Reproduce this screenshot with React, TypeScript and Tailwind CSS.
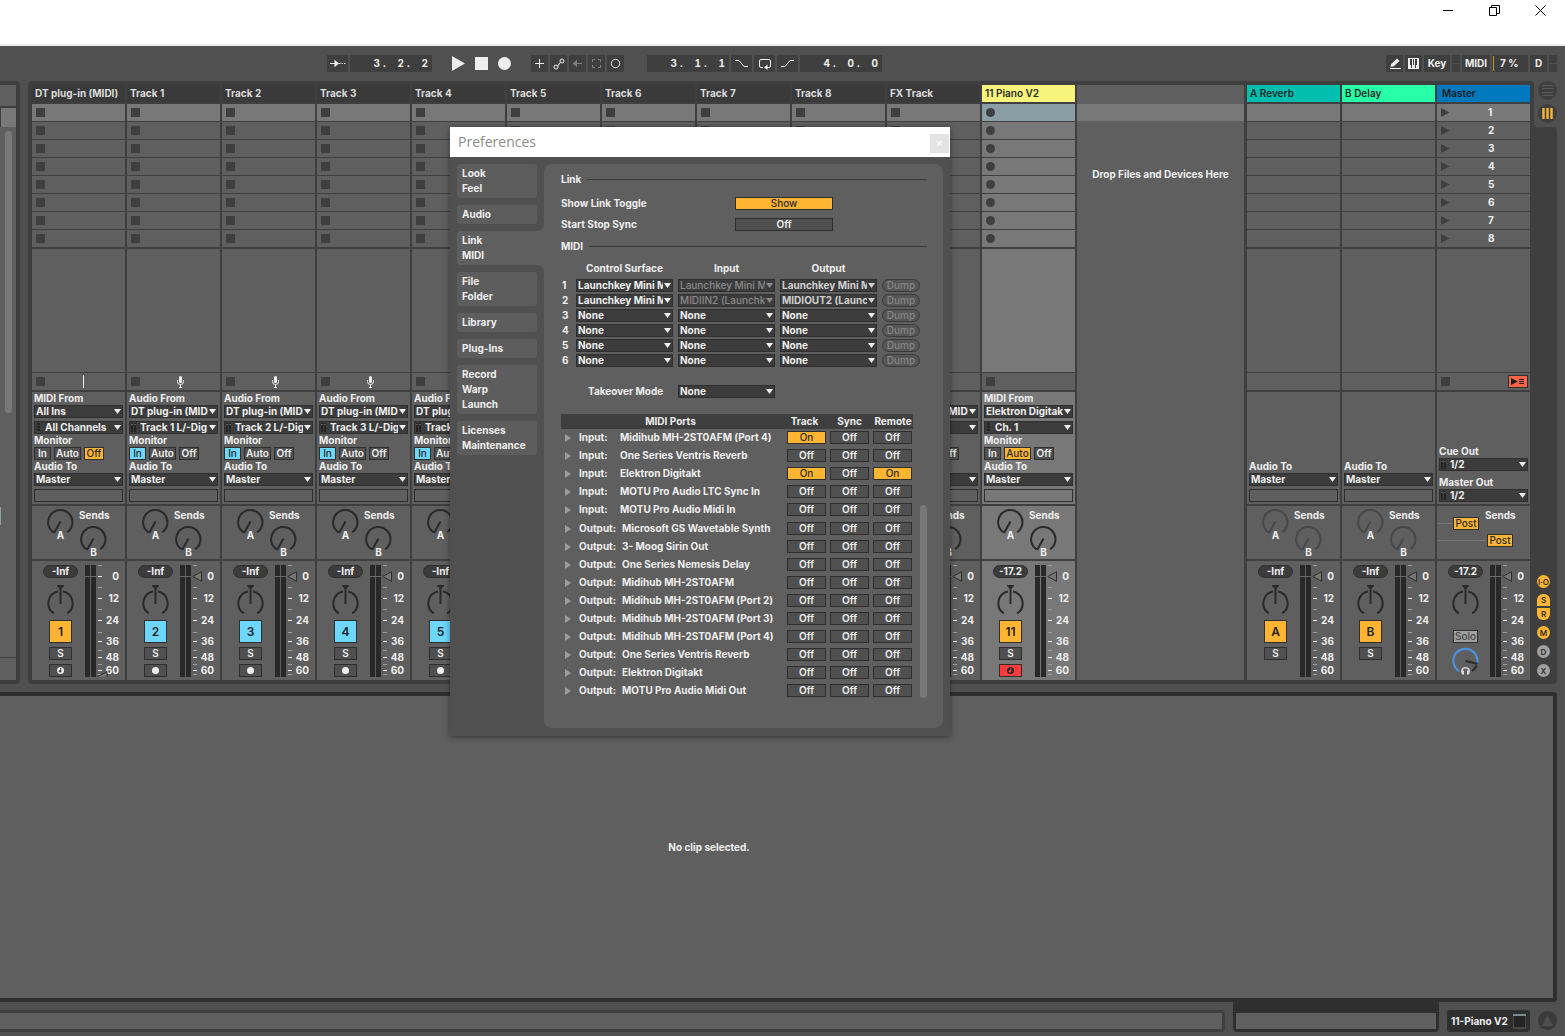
import React from "react";

const RULES = "bg-[#3f3f3f]";

type Monitor = "In" | "Auto" | "Off" | null;

interface Track {
  name: string;
  label: string;
  kind: "midi" | "audio" | "armed";
  from: string;
  channel: string;
  monitor: Monitor;
  faderDown?: boolean;
  collapsed?: boolean;
  level: string;
}

const audioTrack = (n: number): Track => ({
  name: `Track ${n}`,
  label: String(n + 1),
  kind: "audio",
  from: "DT plug-in (MIDI)",
  channel: `Track ${n} L/-Dig`,
  monitor: "In",
  collapsed: n > 4,
  level: "-Inf",
});

const TRACKS: Track[] = [
  {
    name: "DT plug-in (MIDI)",
    label: "1",
    kind: "midi",
    from: "All Ins",
    channel: "All Channels",
    monitor: "Off",
    faderDown: true,
    level: "-Inf",
  },
  ...[1, 2, 3, 4, 5, 6, 7, 8].map(audioTrack),
  {
    name: "FX Track",
    label: "10",
    kind: "audio",
    from: "DT plug-in (MIDI)",
    channel: "FX",
    monitor: "In",
    level: "-Inf",
  },
  {
    name: "11 Piano V2",
    label: "11",
    kind: "armed",
    from: "Elektron Digitakt",
    channel: "Ch. 1",
    monitor: "Auto",
    level: "-17.2",
  },
];

const SCENES = [1, 2, 3, 4, 5, 6, 7, 8];

/* ---------- shared controls ---------- */

function Dropdown({
  label,
  value,
  icon,
  tone = "normal",
}: {
  label: string;
  value: string;
  icon?: "midi" | "audio";
  tone?: "normal" | "dim" | "soft";
}) {
  const color =
    tone === "dim" ? "text-[#8a8a8a]" : tone === "soft" ? "text-[#d0d0d0]" : "text-[#eeeeee]";
  return (
    <div className={`relative h-[13px] w-full ${color}`}>
      <select
        aria-label={label}
        disabled={tone === "dim"}
        className={`block h-[13px] w-full appearance-none overflow-hidden rounded-none border border-[#2f2f2f] bg-[#3c3c3c] py-0 pr-[9px] text-[10px] leading-[11px] opacity-100 outline-none ${
          icon ? "pl-[10px]" : "pl-px"
        } ${tone === "dim" ? "font-medium" : "font-bold"}`}
      >
        <option>{value}</option>
      </select>
      {icon === "midi" && (
        <svg className="pointer-events-none absolute top-[2px] left-[3px]" width="4" height="9" viewBox="0 0 4 9">
          <path d="M0 0h3v2H0zM0 3h3v2H0zM0 6h3v2H0z" fill="#252525" />
        </svg>
      )}
      {icon === "audio" && (
        <svg className="pointer-events-none absolute top-[2px] left-[2px]" width="6" height="9" viewBox="0 0 6 9">
          <path d="M0 0h2v9H0zM3 0h2v9H3z" fill="#252525" />
          <path d="M0 1h2v1H0zM3 1h2v1H3z" fill="#5a5a5a" />
        </svg>
      )}
      <svg className="pointer-events-none absolute top-[4px] right-[2px]" width="7" height="5" viewBox="0 0 7 5">
        <path d="M0 0h7L3.5 5z" fill="currentColor" />
      </svg>
    </div>
  );
}

function Toggle({
  children,
  on,
  className = "",
}: {
  children: React.ReactNode;
  on?: "amber" | "blue";
  className?: string;
}) {
  const look =
    on === "amber"
      ? "bg-[#ffb532] text-[#2a2a2a] font-medium"
      : on === "blue"
        ? "bg-[#6cd7ff] text-[#2a2a2a] font-medium"
        : "bg-[#505050] text-[#eeeeee] font-semibold";
  return (
    <button
      type="button"
      aria-pressed={!!on}
      className={`flex h-[13px] items-center justify-center border border-[#2f2f2f] text-[10px] leading-[11px] ${look} ${className}`}
    >
      {children}
    </button>
  );
}

function HiddenSlider({ label, value }: { label: string; value: number }) {
  return (
    <input
      type="range"
      aria-label={label}
      defaultValue={value}
      className="absolute inset-0 h-full w-full cursor-pointer opacity-0"
    />
  );
}

/* ---------- session columns ---------- */

function SendKnob({ name, dim }: { name: string; dim?: boolean }) {
  return (
    <div className={`relative h-[34px] w-[28px] ${dim ? "text-[#484848]" : "text-[#2a2a2a]"}`}>
      <svg width="28" height="28" viewBox="0 0 28 28" fill="none" stroke="currentColor" strokeWidth="2">
        <path d="M7.6 24.4A12.2 12.2 0 1 1 21.2 24.2" />
        <path d="M14.5 13.5L8 25" />
      </svg>
      <span className="absolute inset-x-0 top-[21px] pl-px text-center leading-[12px] text-[#eeeeee]">{name}</span>
      <HiddenSlider label={`Send ${name}`} value={0} />
    </div>
  );
}

function PanKnob() {
  return (
    <div className="relative h-[30px] w-[29px] text-[#2a2a2a]">
      <svg width="29" height="30" viewBox="0 0 29 30" fill="none" stroke="currentColor" strokeWidth="2">
        <path d="M7.8 28.4A12 12 0 0 1 12 6.6M17 6.6A12 12 0 0 1 21.2 28.4" />
        <path d="M14.5 3v16" />
        <path d="M11 0h7v1l-3 3h-1l-3-3z" fill="currentColor" stroke="none" />
      </svg>
      <HiddenSlider label="Pan" value={50} />
    </div>
  );
}

function CueKnob() {
  return (
    <div className="relative h-[30px] w-[29px]">
      <svg width="29" height="30" viewBox="0 0 29 30" fill="none" strokeWidth="2">
        <path d="M8 24A12 12 0 1 1 26.1 16.5" stroke="#4a94e8" />
        <path d="M14.5 14l12 2.8" stroke="#2a2a2a" />
        <path d="M25.6 18.5A12 12 0 0 1 21 24" stroke="#2a2a2a" />
        <path d="M11.600 26.500C9.500 23 11.600 20.700 14.500 20.700S19.500 23 17.400 26.500" stroke="#d8d8d8" strokeWidth="1.500" />
        <path d="M10.500 23.500h2.500v4h-2zM16 23.500h2.500l-.5 4h-2z" fill="#d8d8d8" />
      </svg>
      <HiddenSlider label="Cue volume" value={80} />
    </div>
  );
}

const MAJOR_TICKS = [11, 33, 55, 76, 92, 105];
const MINOR_TICKS = [0, 22, 44, 67, 85, 99, 109];

function Meter({ faderDown }: { faderDown?: boolean }) {
  return (
    <div className="flex flex-1 items-start">
      <svg width="11" height="112" viewBox="0 0 11 112" shapeRendering="crispEdges">
        <path d="M0 0h5v112H0zM6 0h5v112H6z" fill="#282828" />
        <path d="M0 11h11v1H0z" fill="#6a6a6a" />
      </svg>
      <div className="relative ml-px h-[112px] w-[5px]">
        <svg className="absolute top-0 left-0" width="11" height="112" viewBox="0 0 11 112">
          <g shapeRendering="crispEdges">
            {MAJOR_TICKS.map((y) => (
              <rect key={y} x="1" y={y} width="4" height="1" fill="#f0f0f0" />
            ))}
            {MINOR_TICKS.map((y) => (
              <rect key={y} x="1" y={y} width="4" height="1" fill="#9c9c9c" />
            ))}
          </g>
          <path
            d={faderDown ? "M.8 111.500L10 106.500V116.500z" : "M.8 11.500L9.500 6.700V16.300z"}
            fill="#757575"
            stroke="#2f2f2f"
          />
        </svg>
        <HiddenSlider label="Volume" value={faderDown ? 0 : 85} />
      </div>
      <div className="flex flex-1 flex-col pt-[5px] pr-[6px] text-right leading-[13px]">
        <span>0</span>
        <span className="mt-[9px]">12</span>
        <span className="mt-[9px]">24</span>
        <span className="mt-[8px]">36</span>
        <span className="mt-[3px]">48</span>
        <span>60</span>
      </div>
    </div>
  );
}

function LevelPill({ children }: { children: React.ReactNode }) {
  return (
    <div className="flex h-[13px] w-[35px] shrink-0 items-center justify-center rounded-full border border-[#2f2f2f] bg-[#3c3c3c] leading-[11px]">
      {children}
    </div>
  );
}

function ArmIcon({ kind }: { kind: Track["kind"] }) {
  const dot = kind === "armed" ? "#2a2a2a" : "#eeeeee";
  const note = kind === "armed" ? "#ff3a3a" : "#3c3c3c";
  return (
    <svg width="7" height="7" viewBox="0 0 7 7">
      <circle cx="3.5" cy="3.5" r="3.5" fill={dot} />
      {kind !== "audio" && (
        <>
          <path d="M3.800 .8v3.200" stroke={note} />
          <circle cx="3" cy="4.300" r="1.200" fill={note} />
        </>
      )}
    </svg>
  );
}

function Mic() {
  return (
    <svg width="9" height="12" viewBox="0 0 9 12" fill="none" stroke="#eeeeee">
      <rect x="3" y="0" width="3" height="7" rx="1.500" fill="#eeeeee" stroke="none" />
      <path d="M1.500 4v1.500a3 3 0 0 0 6 0V4M4.500 8.500V11M3 11.500h3" />
    </svg>
  );
}

function Sends({ dim }: { dim?: boolean }) {
  return (
    <>
      <div className="pt-[2px]">
        <SendKnob name="A" dim={dim} />
      </div>
      <div className="ml-[5px] flex flex-col pt-[3px]">
        <span className="leading-[12px]">Sends</span>
        <div className="mt-[4px]">
          <SendKnob name="B" dim={dim} />
        </div>
      </div>
    </>
  );
}

function TrackColumn({ track }: { track: Track }) {
  const armed = track.kind === "armed";
  const face = armed ? "bg-[#787878]" : "bg-[#5f5f5f]";
  return (
    <section className="flex w-[93px] shrink-0 flex-col gap-[2px]" aria-label={track.name}>
      <h2
        className={`h-[17px] overflow-hidden pl-[3px] leading-[17px] whitespace-nowrap ${
          armed ? "bg-[#f7f47c] font-semibold text-[#2a2a2a]" : "bg-[#3a3a3a] text-[#dcdcdc]"
        }`}
      >
        {track.name}
      </h2>
      <div className="flex flex-col gap-px">
        {SCENES.map((s) => (
          <div
            key={s}
            className={`flex h-[17px] items-center pl-[4px] ${
              s === 1 ? (armed ? "bg-[#8a9ea6]" : "bg-[#787878]") : face
            }`}
          >
            <button
              type="button"
              aria-label={`Slot ${s}`}
              className={`h-[9px] w-[9px] bg-[#3f3f3f] ${armed ? "rounded-full" : ""}`}
            />
          </div>
        ))}
        <div className={`mt-px h-[123px] ${face}`} />
        <div className="flex h-[17px] items-center bg-[#5f5f5f] pl-[4px]">
          <button type="button" aria-label="Stop clips" className="h-[9px] w-[9px] bg-[#3f3f3f]" />
          {track.kind === "midi" && <span className="ml-[38px] h-[13px] w-px bg-[#eeeeee]" />}
          {track.kind === "audio" && (
            <span className="ml-[36px]">
              <Mic />
            </span>
          )}
        </div>
      </div>
      {track.collapsed ? (
        <>
          <div className="h-[112px] bg-[#5f5f5f]" />
          <div className="h-[53px] bg-[#5f5f5f]" />
          <div className="h-[119px] bg-[#5f5f5f]" />
        </>
      ) : (
        <>
          <TrackRouting track={track} face={face} />
          <div className={`flex h-[53px] pl-[14px] ${face}`}>
            <Sends />
          </div>
          <TrackMixer track={track} face={face} />
        </>
      )}
    </section>
  );
}

function TrackRouting({ track, face }: { track: Track; face: string }) {
  return (
    <div className={`flex h-[112px] flex-col px-[2px] leading-[13px] ${face}`}>
      <span>{track.kind === "audio" ? "Audio From" : "MIDI From"}</span>
      <Dropdown label="Input type" value={track.from} />
      <div className="mt-[3px]">
        <Dropdown label="Input channel" value={track.channel} icon={track.kind === "audio" ? "audio" : "midi"} />
      </div>
      <span>Monitor</span>
      <div className="flex gap-[3px]">
        <Toggle className="w-[17px]" on={track.monitor === "In" ? "blue" : undefined}>
          In
        </Toggle>
        <Toggle className="w-[27px]" on={track.monitor === "Auto" ? "amber" : undefined}>
          Auto
        </Toggle>
        <Toggle className="w-[20px]" on={track.monitor === "Off" ? "amber" : undefined}>
          Off
        </Toggle>
      </div>
      <span>Audio To</span>
      <Dropdown label="Output type" value="Master" />
      <div className="mt-[3px] h-[13px] border border-[#2f2f2f]" />
    </div>
  );
}

function TrackMixer({ track, face }: { track: Track; face: string }) {
  const armed = track.kind === "armed";
  return (
    <div className={`flex h-[119px] pt-[4px] pl-[11px] ${face}`}>
      <div className="mr-[7px] flex w-[35px] flex-col items-center">
        <LevelPill>{track.level}</LevelPill>
        <div className="mt-[7px]">
          <PanKnob />
        </div>
        <button
          type="button"
          className={`mt-[5px] flex h-[23px] w-[23px] shrink-0 items-center justify-center border border-[#2f2f2f] text-[12px] font-semibold text-[#1e1e1e] ${
            track.kind === "audio" ? "bg-[#6cd7ff]" : "bg-[#ffb532]"
          }`}
        >
          {track.label}
        </button>
        <Toggle className="mt-[4px] w-[23px] shrink-0">S</Toggle>
        <button
          type="button"
          aria-label="Arm"
          className={`mt-[4px] flex h-[13px] w-[23px] shrink-0 items-center justify-center border border-[#2f2f2f] ${
            armed ? "bg-[#ff3a3a]" : "bg-[#505050]"
          }`}
        >
          <ArmIcon kind={track.kind} />
        </button>
      </div>
      <Meter faderDown={track.faderDown} />
    </div>
  );
}

function SceneRows({ numbered }: { numbered?: boolean }) {
  return (
    <>
      {SCENES.map((s) => (
        <div key={s} className={`flex h-[17px] items-center pl-[4px] ${s === 1 ? "bg-[#787878]" : "bg-[#5f5f5f]"}`}>
          {numbered && (
            <>
              <button type="button" aria-label={`Launch scene ${s}`}>
                <svg className="block" width="9" height="9" viewBox="0 0 9 9">
                  <path d="M0 0L8.500 4.500L0 9z" fill="#3f3f3f" />
                </svg>
              </button>
              <span className="ml-[38px]">{s}</span>
            </>
          )}
        </div>
      ))}
      <div className="mt-px h-[123px] bg-[#5f5f5f]" />
    </>
  );
}

function ReturnColumn({ letter, name }: { letter: string; name: string }) {
  return (
    <section className="flex w-[93px] shrink-0 flex-col gap-[2px]" aria-label={`${letter} ${name}`}>
      <h2
        className={`h-[17px] pl-[3px] leading-[17px] font-semibold text-[#2a2a2a] ${
          letter === "A" ? "bg-[#00bfaf]" : "bg-[#26ffa8]"
        }`}
      >
        {letter} {name}
      </h2>
      <div className="flex flex-col gap-px">
        <SceneRows />
        <div className="h-[17px] bg-[#5f5f5f]" />
      </div>
      <div className="flex h-[112px] flex-col justify-end bg-[#5f5f5f] px-[2px] pb-[2px] leading-[13px]">
        <span>Audio To</span>
        <Dropdown label="Output type" value="Master" />
        <div className="mt-[3px] h-[13px] border border-[#2f2f2f]" />
      </div>
      <div className="flex h-[53px] bg-[#5f5f5f] pl-[14px]">
        <Sends dim />
      </div>
      <div className="flex h-[119px] bg-[#5f5f5f] pt-[4px] pl-[11px]">
        <div className="mr-[7px] flex w-[35px] flex-col items-center">
          <LevelPill>-Inf</LevelPill>
          <div className="mt-[7px]">
            <PanKnob />
          </div>
          <button
            type="button"
            className="mt-[5px] flex h-[23px] w-[23px] shrink-0 items-center justify-center border border-[#2f2f2f] bg-[#ffb532] text-[12px] font-semibold text-[#1e1e1e]"
          >
            {letter}
          </button>
          <Toggle className="mt-[4px] w-[23px] shrink-0">S</Toggle>
        </div>
        <Meter />
      </div>
    </section>
  );
}

function MasterColumn() {
  return (
    <section className="flex w-[93px] shrink-0 flex-col gap-[2px]" aria-label="Master">
      <h2 className="h-[17px] bg-[#0079bf] pl-[5px] leading-[17px] font-semibold text-[#1e1e1e]">Master</h2>
      <div className="flex flex-col gap-px">
        <SceneRows numbered />
        <div className="flex h-[17px] items-center justify-between bg-[#5f5f5f] pr-[2px] pl-[4px]">
          <button type="button" aria-label="Stop all clips" className="h-[9px] w-[9px] bg-[#3f3f3f]" />
          <button
            type="button"
            aria-label="Back to arrangement"
            className="flex h-[13px] w-[20px] items-center justify-center border border-[#2f2f2f] bg-[#ff6446]"
          >
            <svg width="14" height="7" viewBox="0 0 14 7">
              <path d="M0 0L7 3.500L0 7z" fill="#1e1e1e" />
              <path d="M8 1.500h5M8 3.500h5M8 5.500h5" stroke="#1e1e1e" />
            </svg>
          </button>
        </div>
      </div>
      <div className="flex h-[112px] flex-col justify-end bg-[#5f5f5f] px-[2px] pb-[2px] leading-[13px]">
        <span>Cue Out</span>
        <Dropdown label="Cue output" value="1/2" icon="audio" />
        <span className="mt-[5px]">Master Out</span>
        <Dropdown label="Master output" value="1/2" icon="audio" />
      </div>
      <div className="h-[53px] bg-[#5f5f5f] pl-px">
        <div className="flex h-[24px] items-start">
          <span className="mt-[17px] mr-px h-px w-[14px] bg-[#787878]" />
          <Toggle on="amber" className="mt-[11px] w-[26px]">
            Post
          </Toggle>
          <span className="mt-[3px] ml-[6px] leading-[12px]">Sends</span>
        </div>
        <div className="mt-[4px] flex items-center">
          <span className="mr-px h-px w-[48px] bg-[#787878]" />
          <Toggle on="amber" className="w-[26px]">
            Post
          </Toggle>
        </div>
      </div>
      <div className="flex h-[119px] bg-[#5f5f5f] pt-[4px] pl-[11px]">
        <div className="mr-[7px] flex w-[35px] flex-col items-center">
          <LevelPill>-17.2</LevelPill>
          <div className="mt-[7px]">
            <PanKnob />
          </div>
          <button
            type="button"
            className="mt-[15px] flex h-[13px] w-[25px] shrink-0 items-center justify-center border border-[#2f2f2f] bg-[#a0a0a0] leading-[11px] font-medium text-[#484848]"
          >
            Solo
          </button>
          <div className="mt-[4px]">
            <CueKnob />
          </div>
        </div>
        <Meter />
      </div>
    </section>
  );
}

function RoundSwitch({ children, shape, on }: { children: string; shape: string; on?: boolean }) {
  return (
    <button
      type="button"
      className={`flex w-[13px] items-center justify-center text-[8px] leading-none font-semibold text-[#2f2f2f] ${shape} ${
        on ? "bg-[#ffb532]" : "bg-[#a0a0a0]"
      }`}
    >
      {children}
    </button>
  );
}

function SideStrip() {
  return (
    <aside className="flex w-[23px] shrink-0 flex-col">
      <div className={RULES}>
        <div className="flex h-[46px] flex-col items-end gap-[4px] rounded-bl-[4px] bg-[#505050]">
          <button
            type="button"
            aria-label="Arrangement view"
            className="flex h-[19px] w-[19px] items-center justify-center rounded-full bg-[#3f3f3f]"
          >
            <svg width="11" height="11" viewBox="0 0 11 11" stroke="#5a5a5a">
              <path d="M0 .5h11M0 3.500h11M0 7.500h11M0 10.500h11" />
            </svg>
          </button>
          <button
            type="button"
            aria-label="Session view"
            className="flex h-[19px] w-[19px] items-center justify-center rounded-full bg-[#3f3f3f]"
          >
            <svg width="11" height="11" viewBox="0 0 11 11">
              <path d="M0 0h3v11H0zM4 0h3v11H4zM8 0h3v11H8z" fill="#c8922e" />
              <path d="M1 0h1v11H1zM5 0h1v11H5zM9 0h1v11H9z" fill="#ffb532" />
            </svg>
          </button>
        </div>
      </div>
      <div className="flex flex-1 flex-col justify-end rounded-r-[4px] bg-[#3f3f3f] pb-[7px] pl-[3px]">
        <RoundSwitch on shape="h-[13px] rounded-full">
          I·O
        </RoundSwitch>
        <RoundSwitch on shape="mt-[6px] h-[12px] rounded-t-[6px]">
          S
        </RoundSwitch>
        <RoundSwitch on shape="mt-[2px] h-[12px] rounded-b-[6px]">
          R
        </RoundSwitch>
        <RoundSwitch on shape="mt-[6px] h-[13px] rounded-full">
          M
        </RoundSwitch>
        <RoundSwitch shape="mt-[6px] h-[13px] rounded-full">D</RoundSwitch>
        <RoundSwitch shape="mt-[6px] h-[13px] rounded-full">X</RoundSwitch>
      </div>
    </aside>
  );
}

/* ---------- window chrome and transport ---------- */

function TitleBar() {
  return (
    <header className="flex h-[46px] items-start justify-end border-b-2 border-[#ececec] bg-white pr-[2px]">
      <button type="button" aria-label="Minimize" className="flex h-[20px] w-[46px] items-center justify-center">
        <svg width="11" height="11" viewBox="0 0 11 11" stroke="#000">
          <path d="M0 5.500h10" />
        </svg>
      </button>
      <button type="button" aria-label="Restore" className="flex h-[20px] w-[46px] items-center justify-center">
        <svg width="11" height="11" viewBox="0 0 11 11" fill="none" stroke="#000">
          <path d="M.5 2.500h7v8h-7zM2.500 2.500v-2h8v8h-3" />
        </svg>
      </button>
      <button type="button" aria-label="Close" className="flex h-[20px] w-[46px] items-center justify-center">
        <svg width="11" height="11" viewBox="0 0 11 11" stroke="#000">
          <path d="M.5.5l10 10M10.500.5l-10 10" />
        </svg>
      </button>
    </header>
  );
}

function Counter({ a, b, c }: { a: string; b: string; c: string }) {
  return (
    <div className="flex h-[17px] w-[82px] items-center justify-end bg-[#3f3f3f] pr-[4px] text-[10px] tabular-nums">
      <span className="flex w-[24px] gap-[3px]">
        <span>{a}</span>
        <span>.</span>
      </span>
      <span className="flex w-[24px] gap-[3px]">
        <span>{b}</span>
        <span>.</span>
      </span>
      <span>{c}</span>
    </div>
  );
}

function ToolButton({ label, wide, children }: { label: string; wide?: boolean; children: React.ReactNode }) {
  return (
    <button
      type="button"
      aria-label={label}
      className={`flex h-[17px] items-center justify-center bg-[#3f3f3f] ${wide ? "w-[21px]" : "w-[17px]"}`}
    >
      {children}
    </button>
  );
}

function Toolbar() {
  return (
    <div className="flex h-[35px] items-center pr-[8px] pl-[327px]">
      <div className="flex gap-[2px]">
        <ToolButton label="Follow" wide>
          <svg width="16" height="9" viewBox="0 0 16 9" fill="none" stroke="#eeeeee">
            <path d="M0 4.500h5" />
            <path d="M4.500.8v7.400L9 4.500z" fill="#eeeeee" stroke="none" />
            <path d="M9 4.500h1.500M11.500 4.500h1.500M14 4.500h1.500" />
          </svg>
        </ToolButton>
        <Counter a="3" b="2" c="2" />
      </div>
      <div className="ml-[19px] flex items-center gap-[10px]">
        <button type="button" aria-label="Play">
          <svg className="block" width="14" height="15" viewBox="0 0 14 15">
            <path d="M1 0L14 7.500L1 15z" fill="#eeeeee" />
          </svg>
        </button>
        <button type="button" aria-label="Stop" className="h-[13px] w-[13px] bg-[#eeeeee]" />
        <button type="button" aria-label="Record" className="h-[13px] w-[13px] rounded-full bg-[#eeeeee]" />
      </div>
      <div className="ml-[20px] flex gap-[2px]">
        <ToolButton label="Overdub">
          <svg width="11" height="11" viewBox="0 0 11 11" stroke="#eeeeee">
            <path d="M5.500 1v9M1 5.500h9" />
          </svg>
        </ToolButton>
        <ToolButton label="Automation arm">
          <svg width="12" height="12" viewBox="0 0 12 12" fill="none" stroke="#eeeeee">
            <circle cx="3" cy="9" r="2" />
            <circle cx="9" cy="3" r="2" />
            <path d="M4.500 8L5.500 7.500L6.500 5L7.500 4.300" />
          </svg>
        </ToolButton>
        <ToolButton label="Re-enable automation">
          <svg width="11" height="9" viewBox="0 0 11 9" fill="none" stroke="#808080">
            <path d="M4 4.500h6" />
            <path d="M5 .8v7.400L.8 4.500z" fill="#808080" stroke="none" />
          </svg>
        </ToolButton>
        <ToolButton label="Capture">
          <svg width="11" height="11" viewBox="0 0 11 11" fill="none" stroke="#808080">
            <path d="M1.500 4V1.500H4M7 1.500h2.500V4M9.500 7v2.500H7M4 9.500H1.500V7" />
          </svg>
        </ToolButton>
        <ToolButton label="Session record">
          <svg width="11" height="11" viewBox="0 0 11 11" fill="none" stroke="#eeeeee">
            <circle cx="5.500" cy="5.500" r="4.200" />
          </svg>
        </ToolButton>
      </div>
      <div className="ml-[23px] flex gap-[2px]">
        <Counter a="3" b="1" c="1" />
        <ToolButton label="Punch in" wide>
          <svg width="13" height="9" viewBox="0 0 13 9" fill="none" stroke="#eeeeee">
            <path d="M0 1.500h4l5 6h4" />
          </svg>
        </ToolButton>
        <ToolButton label="Loop" wide>
          <svg width="14" height="12" viewBox="0 0 14 12" fill="none" stroke="#eeeeee">
            <path d="M5 9.500H3a1.500 1.500 0 0 1-1.500-1.500V3A1.500 1.500 0 0 1 3 1.500h8A1.500 1.500 0 0 1 12.500 3v5A1.500 1.500 0 0 1 11 9.500H9" />
            <path d="M9.500 6.500v5.500L6 9.500z" fill="#eeeeee" stroke="none" />
          </svg>
        </ToolButton>
        <ToolButton label="Punch out" wide>
          <svg width="13" height="9" viewBox="0 0 13 9" fill="none" stroke="#eeeeee">
            <path d="M0 7.500h4l5-6h4" />
          </svg>
        </ToolButton>
        <Counter a="4" b="0" c="0" />
      </div>
      <div className="ml-auto flex gap-[2px]">
        <ToolButton label="Draw mode">
          <svg width="12" height="12" viewBox="0 0 12 12">
            <path d="M1.500 9L2.200 6L8 .6L10.500 2.900L4.500 8.500z" fill="#eeeeee" />
            <path d="M1 10.500h11" stroke="#eeeeee" />
          </svg>
        </ToolButton>
        <ToolButton label="Computer MIDI keyboard">
          <svg width="11" height="11" viewBox="0 0 11 11" shapeRendering="crispEdges">
            <path d="M0 0h11v11H0z" fill="#eeeeee" />
            <path d="M2 1h2v6H2zM7 1h2v6H7zM3 7h1v3H3zM7 7h1v3H7zM5 1h1v6H5z" fill="#3f3f3f" />
          </svg>
        </ToolButton>
        <button type="button" className="h-[17px] w-[26px] bg-[#3f3f3f]">
          Key
        </button>
        <span className="flex h-[17px] w-[8px] flex-col gap-px">
          <span className="flex-1 bg-[#3f3f3f]" />
          <span className="flex-1 bg-[#3f3f3f]" />
        </span>
        <button type="button" className="h-[17px] w-[28px] bg-[#3f3f3f]">
          MIDI
        </button>
        <span className="flex h-[17px] w-[36px] items-center bg-[#3f3f3f] pl-px">
          <span className="mr-[6px] h-[15px] w-px bg-[#c8922e]" />7 %
        </span>
        <button type="button" className="h-[17px] w-[17px] bg-[#3f3f3f]">
          D
        </button>
        <span className="flex h-[17px] w-[8px] flex-col gap-px">
          <span className="flex-1 bg-[#3f3f3f]" />
          <span className="flex-1 bg-[#3f3f3f]" />
        </span>
      </div>
    </div>
  );
}

function BrowserEdge() {
  return (
    <aside className="mr-[8px] flex w-[20px] shrink-0 flex-col rounded-r-[4px] bg-[#3f3f3f] py-[4px] pr-[4px]">
      <div className="h-[21px] bg-[#5f5f5f]" />
      <div className="mt-[2px] ml-px h-[19px] bg-[#787878]" />
      <div className="flex flex-1 flex-col items-end bg-[#5f5f5f] pt-[4px] pr-[4px]">
        <div className="h-[282px] w-[7px] rounded-full bg-[#787878]" />
        <div className="mt-[94px] h-[18px] w-px self-start bg-[#8a9ea6]" />
      </div>
      <div className="mt-px h-[22px] bg-[#5f5f5f]" />
    </aside>
  );
}

/* ---------- preferences dialog ---------- */

const PREF_TABS = [
  ["Look", "Feel"],
  ["Audio"],
  ["Link", "MIDI"],
  ["File", "Folder"],
  ["Library"],
  ["Plug-Ins"],
  ["Record", "Warp", "Launch"],
  ["Licenses", "Maintenance"],
];

const SURFACES = [
  ["Launchkey Mini MK3", "Launchkey Mini MK3", "Launchkey Mini MK3"],
  ["Launchkey Mini MK3", "MIDIIN2 (Launchkey)", "MIDIOUT2 (Launchkey)"],
  ["None", "None", "None"],
  ["None", "None", "None"],
  ["None", "None", "None"],
  ["None", "None", "None"],
];

const PORTS: { dir: "Input" | "Output"; name: string; on: [boolean, boolean, boolean] }[] = [
  { dir: "Input", name: "Midihub MH-2ST0AFM (Port 4)", on: [true, false, false] },
  { dir: "Input", name: "One Series Ventris Reverb", on: [false, false, false] },
  { dir: "Input", name: "Elektron Digitakt", on: [true, false, true] },
  { dir: "Input", name: "MOTU Pro Audio LTC Sync In", on: [false, false, false] },
  { dir: "Input", name: "MOTU Pro Audio Midi In", on: [false, false, false] },
  { dir: "Output", name: "Microsoft GS Wavetable Synth", on: [false, false, false] },
  { dir: "Output", name: "3- Moog Sirin Out", on: [false, false, false] },
  { dir: "Output", name: "One Series Nemesis Delay", on: [false, false, false] },
  { dir: "Output", name: "Midihub MH-2ST0AFM", on: [false, false, false] },
  { dir: "Output", name: "Midihub MH-2ST0AFM (Port 2)", on: [false, false, false] },
  { dir: "Output", name: "Midihub MH-2ST0AFM (Port 3)", on: [false, false, false] },
  { dir: "Output", name: "Midihub MH-2ST0AFM (Port 4)", on: [false, false, false] },
  { dir: "Output", name: "One Series Ventris Reverb", on: [false, false, false] },
  { dir: "Output", name: "Elektron Digitakt", on: [false, false, false] },
  { dir: "Output", name: "MOTU Pro Audio Midi Out", on: [false, false, false] },
];

function SectionTitle({ children }: { children: string }) {
  return (
    <h3 className="flex items-center gap-[6px] leading-[13px]">
      {children}
      <span className="h-px flex-1 bg-[#3a3a3a]" />
    </h3>
  );
}

function Preferences() {
  return (
    <div
      role="dialog"
      aria-label="Preferences"
      className="absolute top-[127px] left-[450px] w-[500px] bg-[#505050] shadow-[0_1px_6px_rgba(0,0,0,0.45)]"
    >
      <div className="flex h-[30px] items-center justify-between bg-white pr-px pl-[8px]">
        <h2 className="font-['Open_Sans',sans-serif] text-[14px] leading-[20px] font-normal text-[#8c8c8c]">
          Preferences
        </h2>
        <button
          type="button"
          aria-label="Close preferences"
          className="mt-[3px] flex h-[19px] w-[19px] items-center justify-center bg-[#e3e3e3]"
        >
          <svg width="7" height="7" viewBox="0 0 7 7" stroke="#f6f6f6" strokeWidth="1.500">
            <path d="M1 1l5 5M6 1L1 6" />
          </svg>
        </button>
      </div>
      <div className="flex px-[7px] pt-[7px] pb-[8px]">
        <nav className="flex w-[87px] flex-col gap-[7px] leading-[15px]">
          {PREF_TABS.map((lines) => {
            const active = lines[1] === "MIDI";
            return (
              <button
                key={lines[0]}
                type="button"
                className={`relative flex flex-col items-start py-[2px] pl-[5px] ${
                  active ? "rounded-l-[3px] bg-[#5f5f5f]" : "mr-[7px] rounded-[3px] bg-[#5d5d5d]"
                }`}
              >
                {lines.map((l) => (
                  <span key={l}>{l}</span>
                ))}
                {active && (
                  <>
                    <svg className="absolute -top-[7px] right-0" width="7" height="7" viewBox="0 0 7 7">
                      <path d="M7 0V7H0A7 7 0 0 0 7 0z" fill="#5f5f5f" />
                    </svg>
                    <svg className="absolute right-0 -bottom-[7px]" width="7" height="7" viewBox="0 0 7 7">
                      <path d="M7 7V0H0A7 7 0 0 1 7 7z" fill="#5f5f5f" />
                    </svg>
                  </>
                )}
              </button>
            );
          })}
        </nav>
        <div className="flex-1 rounded-[8px] bg-[#5f5f5f] pt-[9px] pr-[16px] pb-[30px] pl-[17px]">
          <SectionTitle>Link</SectionTitle>
          <div className="mt-[11px] flex items-center leading-[13px]">
            <span className="w-[174px]">Show Link Toggle</span>
            <Toggle on="amber" className="w-[98px]">
              Show
            </Toggle>
          </div>
          <div className="mt-[8px] flex items-center leading-[13px]">
            <span className="w-[174px]">Start Stop Sync</span>
            <Toggle className="w-[98px]">Off</Toggle>
          </div>
          <div className="mt-[9px]">
            <SectionTitle>MIDI</SectionTitle>
          </div>
          <div className="mt-[9px] grid grid-cols-[10px_97px_97px_97px_38px] gap-x-[5px] gap-y-[2px] leading-[13px]">
            <span />
            <span className="mb-[2px] text-center">Control Surface</span>
            <span className="mb-[2px] text-center">Input</span>
            <span className="mb-[2px] text-center">Output</span>
            <span />
            {SURFACES.map(([surface, input, output], i) => (
              <React.Fragment key={i}>
                <span className="pl-px">{i + 1}</span>
                <Dropdown label={`Control surface ${i + 1}`} value={surface} />
                <Dropdown label={`Input ${i + 1}`} value={input} tone={i < 2 ? "dim" : "normal"} />
                <Dropdown label={`Output ${i + 1}`} value={output} tone={i < 2 ? "soft" : "normal"} />
                <button
                  type="button"
                  disabled
                  className="h-[13px] rounded-full border border-[#3a3a3a] bg-[#565656] leading-[11px] font-medium text-[#858585]"
                >
                  Dump
                </button>
              </React.Fragment>
            ))}
          </div>
          <div className="mt-[18px] flex items-center pl-[27px] leading-[13px]">
            <span className="w-[90px]">Takeover Mode</span>
            <div className="w-[97px]">
              <Dropdown label="Takeover mode" value="None" />
            </div>
          </div>
          <div className="mt-[16px] flex h-[284px] justify-between">
            <table className="w-[352px] table-fixed border-collapse self-start leading-[13px]">
              <colgroup>
                <col className="w-[18px]" />
                <col className="w-[41px]" />
                <col className="w-[167px]" />
                <col className="w-[43px]" />
                <col className="w-[43px]" />
                <col className="w-[40px]" />
              </colgroup>
              <thead>
                <tr className="h-[15px] bg-[#3f3f3f]">
                  <th colSpan={3} className="p-0 pr-[7px] font-bold">
                    MIDI Ports
                  </th>
                  <th className="p-0 pr-[8px] font-bold">Track</th>
                  <th className="p-0 pr-[4px] font-bold">Sync</th>
                  <th className="p-0 font-bold">Remote</th>
                </tr>
              </thead>
              <tbody>
                {PORTS.map((p, i) => {
                  const first = i === 5;
                  const cell = first ? "p-0 pt-[3px] align-top" : "p-0 pt-[2px] align-top";
                  return (
                    <tr key={i} className={first ? "h-[19px]" : "h-[18px]"}>
                      <td className={`${cell} pl-[4px]`}>
                        <button type="button" aria-label="Expand port" className="flex h-[13px] items-center">
                          <svg width="6" height="8" viewBox="0 0 6 8">
                            <path d="M0 0L6 4L0 8z" fill="#9c9c9c" />
                          </svg>
                        </button>
                      </td>
                      <td className={cell}>{p.dir}:</td>
                      <td className={`${cell} ${p.dir === "Output" ? "pl-[2px]" : ""}`}>{p.name}</td>
                      {p.on.map((v, k) => (
                        <td key={k} className={cell}>
                          <Toggle on={v ? "amber" : undefined} className="w-[39px]">
                            {v ? "On" : "Off"}
                          </Toggle>
                        </td>
                      ))}
                    </tr>
                  );
                })}
              </tbody>
            </table>
            <div className="h-[193px] w-[7px] self-end rounded-full bg-[#787878]" />
          </div>
        </div>
      </div>
    </div>
  );
}

/* ---------- page ---------- */

export default function App() {
  return (
    <div className="relative flex min-h-screen flex-col overflow-hidden bg-[#505050] font-['Inter',sans-serif] text-[10px] font-bold text-[#eeeeee]">
      <TitleBar />
      <Toolbar />
      <div className="flex pr-[8px]">
        <BrowserEdge />
        <main className="flex min-w-0 flex-1 gap-[2px] rounded-l-[4px] rounded-tr-[4px] bg-[#3f3f3f] p-[4px]">
          {TRACKS.map((t) => (
            <TrackColumn key={t.name} track={t} />
          ))}
          <div className="mr-px flex min-w-0 flex-1 flex-col bg-[#5f5f5f] pt-[19px] text-center">
            <div className="h-[17px] bg-[#787878]" />
            <p className="pt-[47px] leading-[13px]">Drop Files and Devices Here</p>
          </div>
          <ReturnColumn letter="A" name="Reverb" />
          <ReturnColumn letter="B" name="Delay" />
          <MasterColumn />
        </main>
        <SideStrip />
      </div>
      <div className="mt-[8px] mr-[8px] flex flex-1 items-center justify-center rounded-r-[4px] border-y-4 border-r-4 border-[#2f2f2f] bg-[#5f5f5f] pr-[135px]">
        <p className="leading-[13px]">No clip selected.</p>
      </div>
      <footer className="flex h-[34px] items-start gap-[8px] pr-[8px]">
        <div className="mt-[8px] h-[22px] flex-1 rounded-r-[4px] border-y-[3px] border-r-[3px] border-[#3f3f3f] bg-[#5f5f5f]" />
        <div className="h-[30px] w-[206px] rounded-b-[4px] bg-[#2f2f2f] px-[3px] pt-[11px]">
          <div className="h-[16px] bg-[#5f5f5f]" />
        </div>
        <button
          type="button"
          className="mt-[8px] flex h-[22px] w-[83px] items-center justify-between rounded-[3px] bg-[#2f2f2f] pr-[4px] pl-[4px]"
        >
          11-Piano V2
          <svg width="13" height="15" viewBox="0 0 13 15">
            <path d="M0 0h13v15H0z" fill="#242424" />
            <path d="M0 0h13v2H0z" fill="#7d8a92" />
            <path d="M0 2h1v11H0zM12 2h1v11h-1zM0 13h13v2H0z" fill="#4a4642" />
          </svg>
        </button>
        <button
          type="button"
          aria-label="Show detail view"
          className="mt-[9px] flex h-[19px] w-[19px] items-center justify-center rounded-full bg-[#3a3a3a]"
        >
          <svg width="11" height="11" viewBox="0 0 11 11">
            <path d="M5.500 0L11 11H0z" fill="#505050" />
          </svg>
        </button>
      </footer>
      <Preferences />
    </div>
  );
}
